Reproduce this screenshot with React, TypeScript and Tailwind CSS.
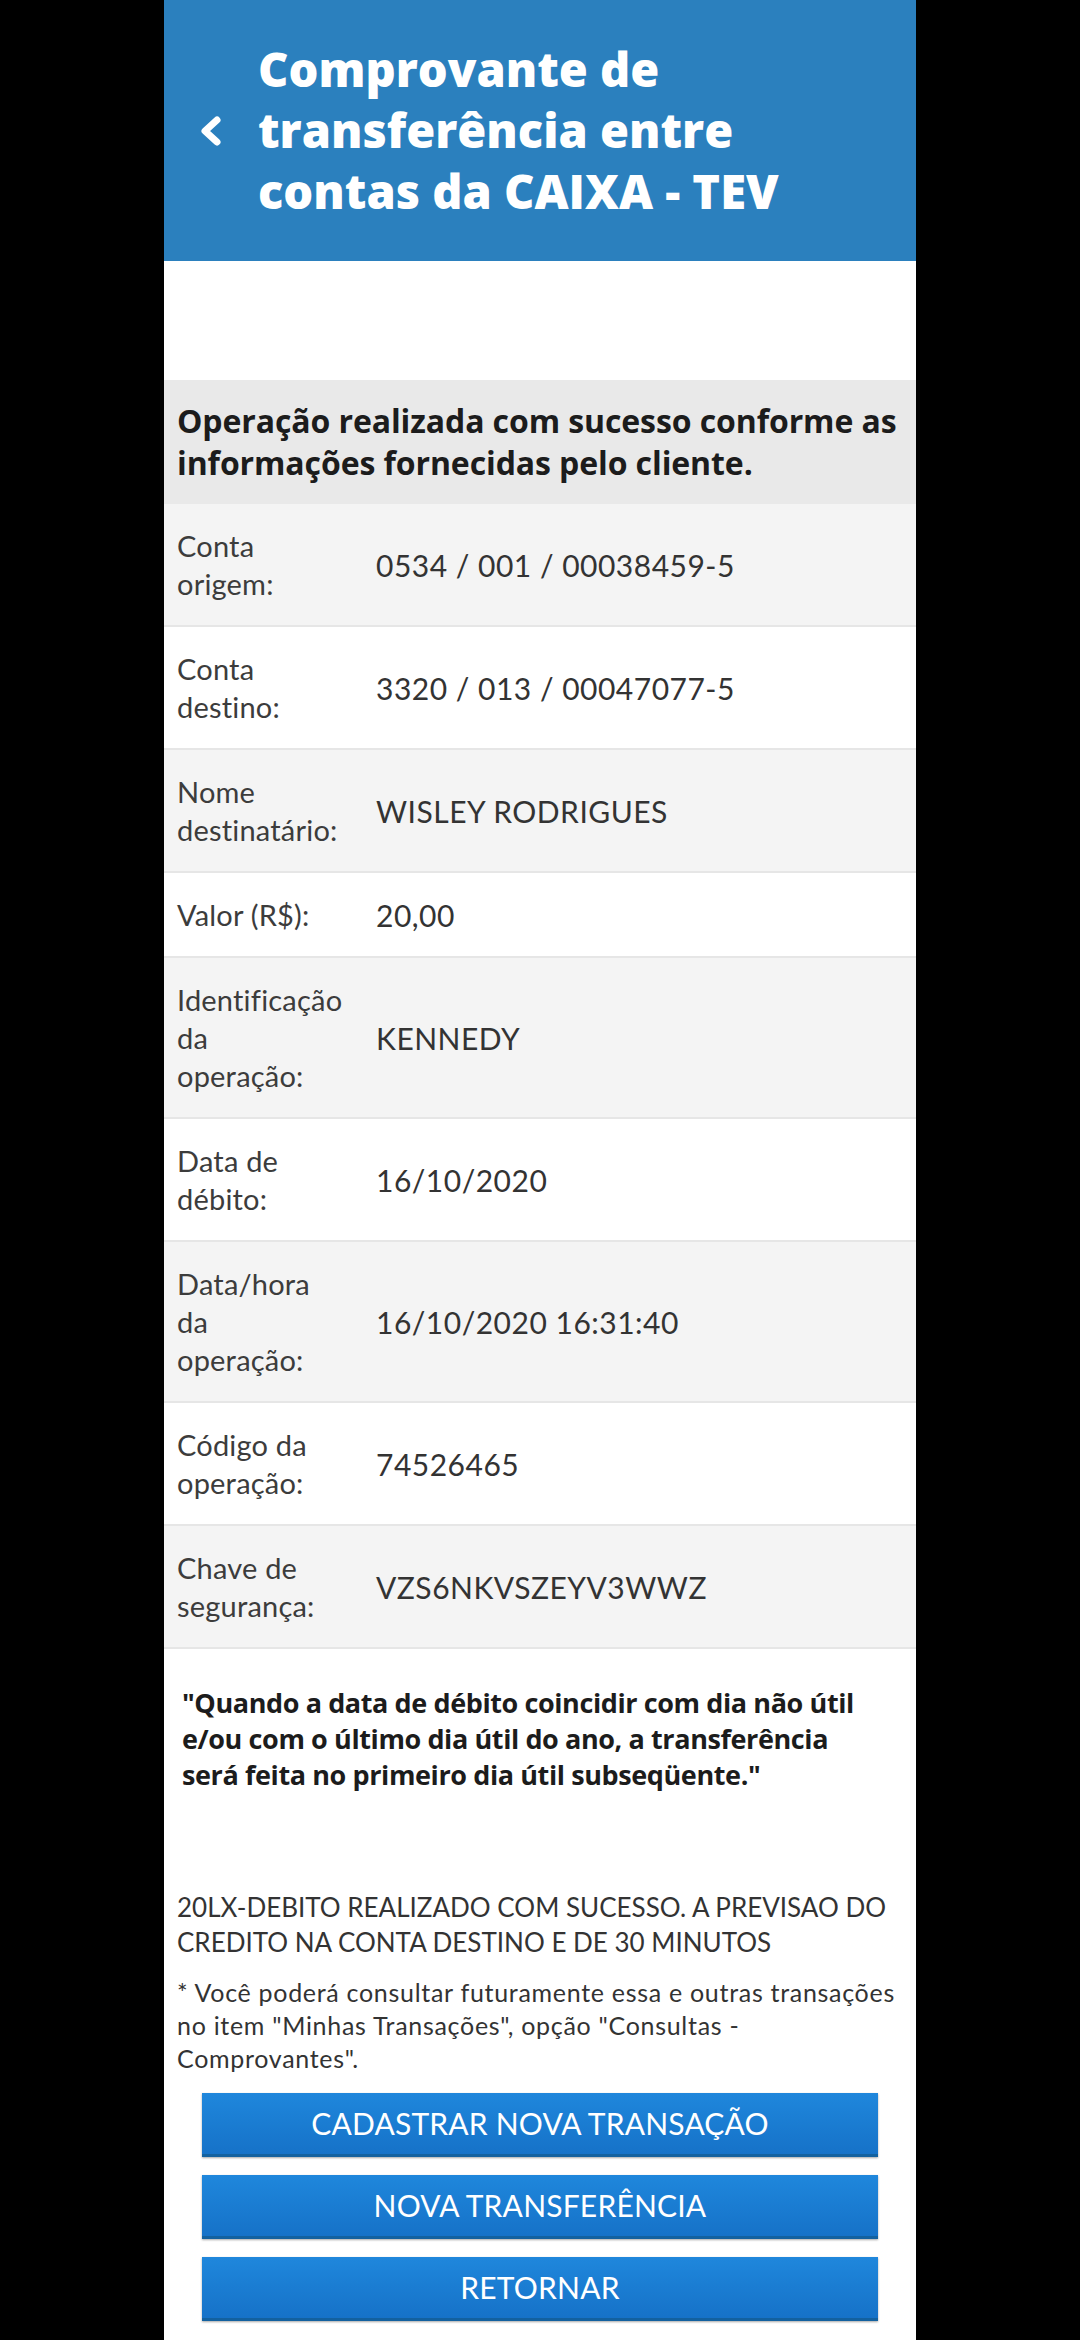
const rows: { label: string[]; value: string; gray: boolean }[] = [
  { label: ["Conta", "origem:"], value: "0534 / 001 / 00038459-5", gray: true },
  { label: ["Conta", "destino:"], value: "3320 / 013 / 00047077-5", gray: false },
  { label: ["Nome", "destinatário:"], value: "WISLEY RODRIGUES", gray: true },
  { label: ["Valor (R$):"], value: "20,00", gray: false },
  { label: ["Identificação", "da", "operação:"], value: "KENNEDY", gray: true },
  { label: ["Data de", "débito:"], value: "16/10/2020", gray: false },
  { label: ["Data/hora", "da", "operação:"], value: "16/10/2020 16:31:40", gray: true },
  { label: ["Código da", "operação:"], value: "74526465", gray: false },
  { label: ["Chave de", "segurança:"], value: "VZS6NKVSZEYV3WWZ", gray: true },
];

const buttons = ["CADASTRAR NOVA TRANSAÇÃO", "NOVA TRANSFERÊNCIA", "RETORNAR"];

export default function App() {
  return (
    <div className="min-h-[2340px] w-full bg-black flex justify-center font-['Lato','Open_Sans',sans-serif]">
      <div className="w-[752px] bg-white flex flex-col">
        <header className="h-[261px] bg-[#2b80be] flex items-center pl-[34px]">
          <svg width="26" height="32" viewBox="0 0 26 32" className="mr-[34px] shrink-0">
            <path d="M19 5 L7 16 L19 27" fill="none" stroke="white" strokeWidth="7" strokeLinecap="round" strokeLinejoin="round" />
          </svg>
          <h1 className="text-white font-['Open_Sans',sans-serif] font-extrabold text-[47px] leading-[61px] tracking-[0px]">
            Comprovante de
            <br />
            transferência entre
            <br />
            contas da CAIXA - TEV
          </h1>
        </header>

        <div className="h-[119px]" />

        <div className="bg-[#e9e9e9] px-[13px] py-[20px]">
          <p className="text-[#1c1c1c] font-['Open_Sans',sans-serif] font-bold text-[32px] leading-[42px] tracking-[-0.1px] whitespace-nowrap">
            Operação realizada com sucesso conforme as
            <br />
            informações fornecidas pelo cliente.
          </p>
        </div>

        <div className="flex flex-col">
          {rows.map((r, i) => (
            <div
              key={i}
              className={`grid grid-cols-[199px_1fr] items-center pl-[13px] pt-[23px] pb-[22px] border-b-2 border-[#e6e6e6] ${r.gray ? "bg-[#f4f4f4]" : "bg-white"}`}
            >
              <div className="text-[#3c3c3c] text-[29px] leading-[38px] tracking-[0.2px]">
                {r.label.map((l, j) => (
                  <div key={j}>{l}</div>
                ))}
              </div>
              <div className="text-[#333] text-[30px] leading-[38px] tracking-[0.5px]">{r.value}</div>
            </div>
          ))}
        </div>

        <p className="px-[18px] pt-[36px] text-[#1c1c1c] font-['Open_Sans',sans-serif] font-bold text-[27px] leading-[36px] tracking-[-0.4px] whitespace-nowrap">
          "Quando a data de débito coincidir com dia não útil
          <br />
          e/ou com o último dia útil do ano, a transferência
          <br />
          será feita no primeiro dia útil subseqüente."
        </p>

        <p className="px-[13px] mt-[97px] text-[#333] text-[26px] leading-[35px]">
          20LX-DEBITO REALIZADO COM SUCESSO. A PREVISAO DO
          <br />
          CREDITO NA CONTA DESTINO E DE 30 MINUTOS
        </p>

        <p className="px-[13px] mt-[16px] text-[#333] text-[25px] leading-[33px] tracking-[0.7px] whitespace-nowrap">
          * Você poderá consultar futuramente essa e outras transações
          <br />
          no item "Minhas Transações", opção "Consultas -
          <br />
          Comprovantes".
        </p>

        <div className="flex flex-col gap-[18px] px-[38px] mt-[18px]">
          {buttons.map((b) => (
            <button
              key={b}
              className="h-[64px] w-full bg-gradient-to-b from-[#1f87dc] to-[#1672c8] border-b-[3px] border-[#13619f] shadow-[0_1px_2px_rgba(0,0,0,0.35)] text-white text-[30px] tracking-[0.2px]"
            >
              {b}
            </button>
          ))}
        </div>
        <div className="h-[22px]" />
      </div>
    </div>
  );
}
